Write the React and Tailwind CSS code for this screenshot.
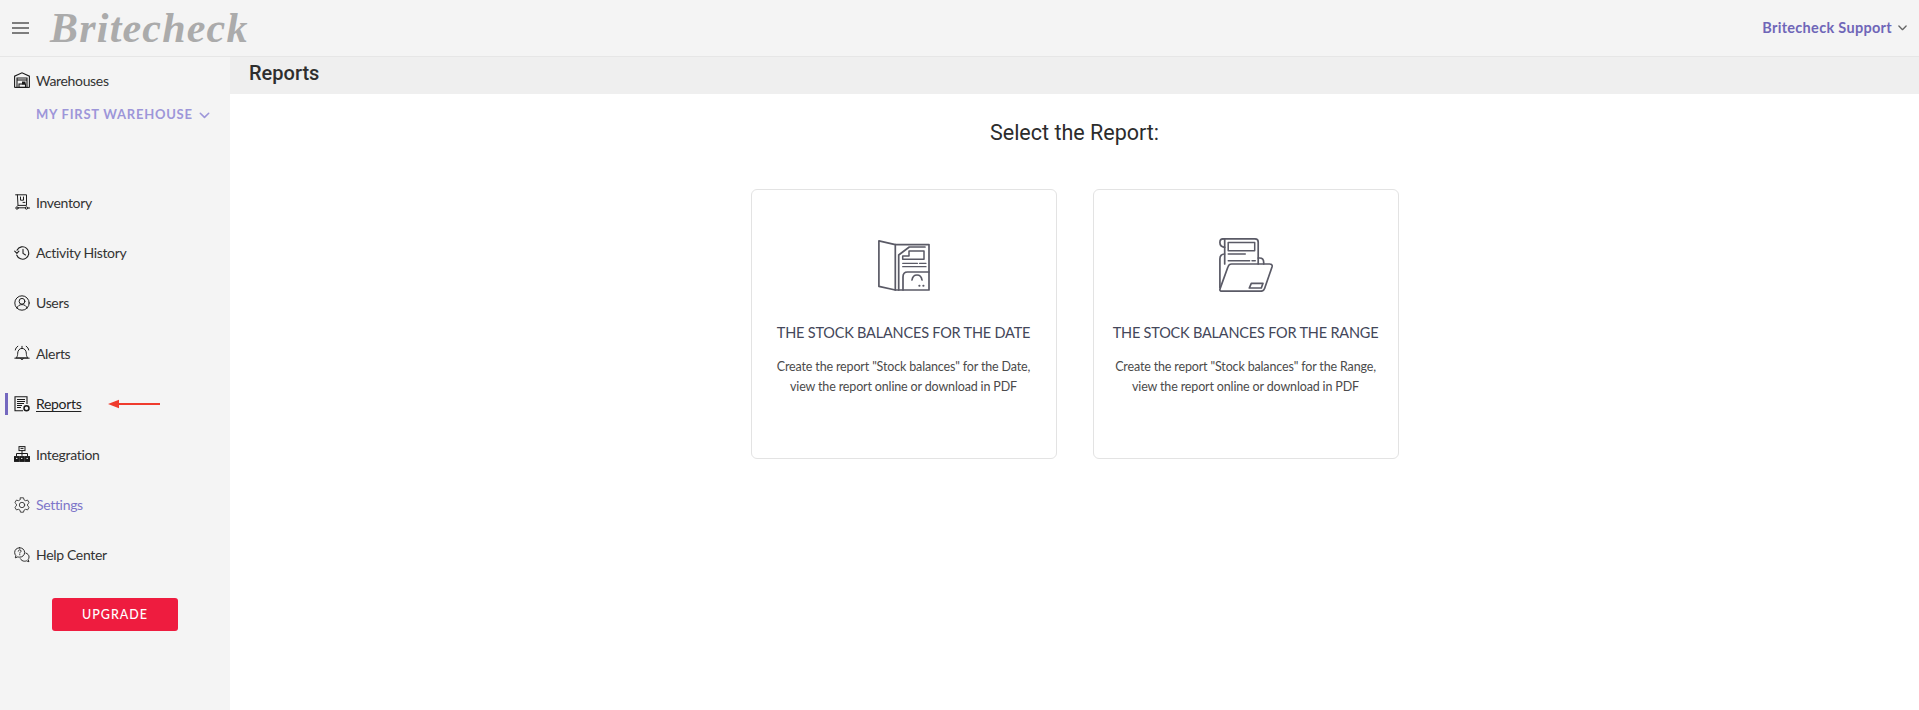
import React from "react";

const S = ({ children, className = "w-[18px] h-[18px]", vb = "0 0 18 18", sw = 1.2, color = "#1f1f1f" }) => (
  <svg viewBox={vb} className={className} fill="none" stroke={color} strokeWidth={sw} strokeLinecap="round" strokeLinejoin="round">
    {children}
  </svg>
);

const WarehouseIcon = () => (
  <svg viewBox="0 0 16 16" className="w-[16px] h-[16px]" fill="none" stroke="#1a1a1a" strokeWidth="1.1">
    <path d="M.6 15.4V4.2L8 .8l7.4 3.4v11.2" />
    <path d="M3 15.4V6h10v9.4" />
    <path d="M3 8h10" />
    <rect x="8" y="9.5" width="3.5" height="3" fill="#1a1a1a" stroke="none" />
    <rect x="5" y="12" width="6.5" height="3.4" />
    <path d="M.6 15.4h14.8" />
  </svg>
);
const InventoryIcon = () => (
  <S vb="0 0 16 16" className="w-[16px] h-[16px]" sw="1">
    <path d="M3.4.8h9.1v10.6H4" />
    <path d="M1.6.8h1.8l.6 10.6" />
    <path d="M6.5 3v3.2h3V3M9 8.4h2" />
    <circle cx="3" cy="14" r="1.2" />
    <circle cx="12.5" cy="14" r="1.2" />
    <path d="M4.2 13.8H11.3M14 14h1.6" />
  </S>
);
const HistoryIcon = () => (
  <S vb="0 0 16 16" className="w-[16px] h-[16px]" sw="1.1">
    <path d="M3 5.2A6.2 6.2 0 1 1 2.7 10" />
    <path d="M.7 6.2 2.9 8.4 4.9 6.2" />
    <path d="M9 4.4V8.4l2.5 1.6" />
  </S>
);
const UserIcon = () => (
  <S vb="0 0 16 16" className="w-[16px] h-[16px]" sw="1">
    <circle cx="8" cy="8" r="7.2" />
    <circle cx="8" cy="6.3" r="2.9" />
    <path d="M2.9 13.1C3.6 10.8 5.6 9.6 8 9.6s4.4 1.2 5.1 3.5" />
  </S>
);
const BellIcon = () => (
  <S vb="0 0 16 16" className="w-[16px] h-[16px]" sw="1">
    <path d="M2.3 12.6c1.3-1.2 1.3-2.5 1.4-4.5C3.8 5.4 5.6 3.4 8 3.4s4.2 2 4.3 4.7c.1 2 .1 3.3 1.4 4.5z" />
    <path d="M.8 13.2h14.4M6.6 13.6a1.5 1.5 0 0 0 2.8 0M8 1.3v2.1" />
    <path d="M3.8 1.3C2.4 2.1 1.6 3.4 1.3 5M12.2 1.3c1.4.8 2.2 2.1 2.5 3.7" />
  </S>
);
const ReportIcon = () => (
  <svg viewBox="0 0 16 16" className="w-[16px] h-[16px]" fill="none" stroke="#1a1a1a" strokeWidth="1.1">
    <path d="M13 8V.7H1v14h8" />
    <path d="M3 3.5h8M3 5.5h8M3 7.5h7M3 9.5h5M3 11.5h4" />
    <circle cx="12.5" cy="12.2" r="2.5" strokeWidth="1.5" />
  </svg>
);
const IntegrationIcon = () => (
  <svg viewBox="0 0 16 16" className="w-[16px] h-[16px]" fill="none" stroke="#1a1a1a" strokeWidth="1">
    <rect x="5" y=".6" width="6" height="4" />
    <path d="M6.5 2.4h3M8 4.6v5.2M2.5 10V7.5h11V10" />
    <rect x=".5" y="10.6" width="4.4" height="4.8" fill="#1a1a1a" />
    <rect x="5.8" y="10.6" width="4.4" height="4.8" fill="#1a1a1a" />
    <rect x="11.1" y="10.6" width="4.4" height="4.8" fill="#1a1a1a" />
    <path d="M2 12.4h1.4M7 12.4h1.4M12.5 12.4h1.4" stroke="#f5f5f5" />
  </svg>
);
const SettingsIcon = () => (
  <S vb="0 0 16 16" className="w-[16px] h-[16px]" sw="0.9" color="#333">
    <path d="M6.5.8h3l.5 2 1.6.9 2-.6 1.5 2.6-1.5 1.4v1.8l1.5 1.4-1.5 2.6-2-.6-1.6.9-.5 2h-3l-.5-2-1.6-.9-2 .6L.9 10.3l1.5-1.4V7.1L.9 5.7l1.5-2.6 2 .6L6 2.8z" />
    <circle cx="8" cy="8" r="2.7" />
  </S>
);
const HelpIcon = () => (
  <S vb="0 0 17 17" className="w-[17px] h-[16px]" sw="1">
    <path d="M6 .8C2.9.8.7 3 .7 5.8c0 1.4.5 2.5 1.3 3.4l-.6 2.3 2.6-1a6 6 0 0 0 2 .3c3 0 5.3-2.2 5.3-5C11.3 3 9 .8 6 .8z" />
    <path d="M4.6 4.4C4.8 3.5 5.4 3 6.1 3c.8 0 1.4.6 1.4 1.3 0 1-1.4 1.1-1.4 2.2M6.1 8v.3" />
    <path d="M12.6 6.4c2 .7 3.4 2.3 3.4 4.2 0 1-.4 2-1 2.7l.9 2.4-2.6-1a6 6 0 0 1-2 .4c-2 0-3.7-1-4.5-2.6" />
  </S>
);

const Chevron = ({ cls, color }) => (
  <svg viewBox="0 0 12 8" className={cls} fill="none" stroke={color} strokeWidth="1.8" strokeLinecap="round" strokeLinejoin="round">
    <path d="M1.2 1.4 6 6.2l4.8-4.8" />
  </svg>
);

const Item = ({ icon, label, className = "text-[#333]" }) => (
  <div className="h-[50.4px] flex items-center pl-[14px] shrink-0">
    <span className="w-[16px] flex justify-center">{icon}</span>
    <span className={`ml-[6px] text-[14px] tracking-[-0.33px] ${className}`}>{label}</span>
  </div>
);

const DateReportIcon = () => (
  <svg viewBox="0 0 52 51" className="w-[52px] h-[51px]" fill="none" stroke="#5a5a66" strokeWidth="1.7" strokeLinejoin="round" strokeLinecap="round">
    <path d="M.9.9 17.3 4.6V50L.9 46.4z" />
    <path d="M17.3 4.6H51V50H17.3" />
    <path d="M20.7 50V15L31.3 7H47" />
    <path d="M31 11H46V19.3H24.7V16H31z" strokeWidth="1.5" />
    <path d="M24.7 23.3H39.5M41.5 23.3H48M24.7 26.7H48" strokeWidth="1.3" />
    <path d="M25 50V37c0-3 1.5-5 4.5-5H51" />
    <path d="M34 40c.5-3.4 2.6-5 5-5s4.5 1.6 5 5" />
    <path d="M41.3 45.7h.2M45.3 45.7h.2" strokeWidth="2" />
  </svg>
);

const RangeReportIcon = () => (
  <svg viewBox="0 0 54 54" className="w-[54px] h-[54px]" fill="none" stroke="#5a5a66" strokeWidth="1.7" strokeLinejoin="round" strokeLinecap="round">
    <path d="M4 .9H36c2 0 3.2 1.2 3.2 3.2V26" />
    <path d="M4 .9C1.9.9.9 2.4.9 4.4s1.2 4.4 4.8 4.9" />
    <path d="M5.7.9V26" />
    <rect x="9.2" y="4.4" width="26.5" height="8.3" strokeWidth="1.5" />
    <path d="M9.2 16H26.3M9.2 22.7H30.7M33 22.7h3.3" strokeWidth="1.4" />
    <path d="M5.5 16C2.5 16 .9 18 .9 21V49.5" />
    <path d="M39.2 20h1.5c2.6 0 4 1.8 4 4.4V26" />
    <path d="M2.6 53.2c-1.3 0-2-1-1.6-2.3L9 28.8c.6-1.8 1.6-2.8 3.6-2.8h38c1.9 0 3 1 2.4 2.9L45.6 50.6c-.6 1.8-1.6 2.6-3.4 2.6z" />
    <path d="M32.3 45.3H44L42.3 50H30.3z" />
  </svg>
);

const Card = ({ icon, title, l1, l2, iconCls }) => (
  <div className="w-[306px] h-[270px] border border-[#e3e3e3] rounded-[6px] bg-white flex flex-col items-center">
    <div className={`h-[62px] flex items-center justify-center ${iconCls}`}>{icon}</div>
    <div className="mt-[27px] text-[14.5px] leading-[20px] tracking-[-0.2px] text-[#44475a] whitespace-nowrap">{title}</div>
    <div className="mt-[14px] text-[12.5px] leading-[20px] tracking-[-0.15px] text-[#4b4b4b] text-center whitespace-nowrap">
      <div>{l1}</div>
      <div>{l2}</div>
    </div>
  </div>
);

export default function App() {
  return (
    <div className="h-screen w-full flex flex-col bg-white overflow-hidden font-['Lato',sans-serif]">
      <header className="h-[57px] shrink-0 bg-[#f4f4f4] border-b border-[#e6e6e6] flex items-center">
        <svg viewBox="0 0 17 12" className="ml-[12px] w-[17px] h-[12px]" stroke="#555" strokeWidth="1.5" fill="none">
          <path d="M0 1h17M0 6h17M0 11h17" />
        </svg>
        <div className="ml-[21px] font-['Liberation_Serif',serif] italic font-bold text-[42px] leading-none text-[#ababab] tracking-[1.2px]">
          Britecheck
        </div>
        <div className="ml-auto mr-[12px] flex items-center">
          <span className="text-[14.5px] font-bold text-[#6f66b8] tracking-[0.3px]">Britecheck Support</span>
          <Chevron cls="ml-[6px] w-[9px] h-[6px]" color="#666" />
        </div>
      </header>
      <div className="flex-1 flex min-h-0">
        <aside className="w-[230px] shrink-0 bg-[#f4f4f4] flex flex-col relative">
          <div className="h-[46px] flex items-center pl-[14px] shrink-0">
            <span className="w-[16px] flex justify-center"><WarehouseIcon /></span>
            <span className="ml-[6px] text-[14px] tracking-[-0.33px] text-[#333]">Warehouses</span>
          </div>
          <div className="mt-[1px] h-[22px] flex items-center pl-[36px] shrink-0">
            <span className="text-[13px] font-bold tracking-[0.75px] text-[#9d96d9] whitespace-nowrap">MY FIRST WAREHOUSE</span>
            <Chevron cls="ml-[6px] w-[11px] h-[7px]" color="#9d96d9" />
          </div>
          <div className="h-[51px] shrink-0" />
          <Item icon={<InventoryIcon />} label="Inventory" />
          <Item icon={<HistoryIcon />} label="Activity History" />
          <Item icon={<UserIcon />} label="Users" />
          <Item icon={<BellIcon />} label="Alerts" />
          <div className="relative">
            <span className="absolute left-[5px] top-[14px] w-[3px] h-[22px] bg-[#7468bf]" />
            <Item icon={<ReportIcon />} label="Reports" className="text-[#222] underline underline-offset-2" />
            <svg viewBox="0 0 52 10" className="absolute left-[108px] top-[20px] w-[52px] h-[10px]">
              <path d="M0 5 11 .8V4H52V6H11V9.2z" fill="#ef3b2d" />
            </svg>
          </div>
          <Item icon={<IntegrationIcon />} label="Integration" />
          <Item icon={<SettingsIcon />} label="Settings" className="text-[#7e76c9]" />
          <Item icon={<HelpIcon />} label="Help Center" />
          <button className="mt-[18px] ml-[52px] w-[126px] h-[33px] shrink-0 rounded-[3px] bg-[#ee1c3f] text-white text-[12.5px] font-medium tracking-[1px] pt-[2px]">
            UPGRADE
          </button>
        </aside>
        <main className="flex-1 flex flex-col min-w-0">
          <div className="h-[37px] shrink-0 bg-[#efefef] flex items-center pl-[19px] pb-[6px] font-['Roboto',sans-serif] font-medium text-[20px] text-[#2e2e2e]">
            Reports
          </div>
          <div className="mt-[23px] text-center font-['Roboto',sans-serif] text-[21.5px] leading-[32px] text-[#2c2c2c]">
            Select the Report:
          </div>
          <div className="mt-[40px] flex justify-center gap-[36px]">
            <Card
              icon={<DateReportIcon />}
              iconCls="mt-[44px]"
              title="THE STOCK BALANCES FOR THE DATE"
              l1={'Create the report "Stock balances" for the Date,'}
              l2="view the report online or download in PDF"
            />
            <Card
              icon={<RangeReportIcon />}
              iconCls="mt-[44px]"
              title="THE STOCK BALANCES FOR THE RANGE"
              l1={'Create the report "Stock balances" for the Range,'}
              l2="view the report online or download in PDF"
            />
          </div>
        </main>
      </div>
    </div>
  );
}
